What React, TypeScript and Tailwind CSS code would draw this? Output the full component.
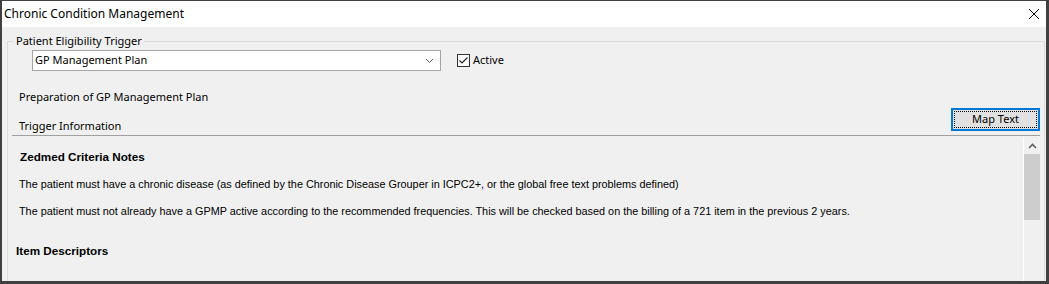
import React from "react";

const ui = "font-['Noto_Sans',sans-serif] text-[11px] text-black";
const doc = "font-['Liberation_Sans',Arial,sans-serif] text-black";

const Chevron = ({ up = false }: { up?: boolean }) => (
  <svg width="9" height="6" viewBox="0 0 9 6" className={up ? "rotate-180" : ""}>
    <path d="M1 1 L4.5 4.5 L8 1" fill="none" stroke="#606060" strokeWidth={up ? 1.6 : 1} />
  </svg>
);

const MapTextButton = () => (
  <button className="h-[23px] w-[89px] border-2 border-[#0078d7] bg-[#e1e1e1] p-px">
    <span className={`${ui} flex h-full w-full items-center justify-center border border-dotted border-black`}>
      Map Text
    </span>
  </button>
);

export default function App() {
  return (
    <div className="flex h-[284px] w-[1049px] flex-col overflow-hidden border-t border-r-[3px] border-b-[3px] border-l-2 border-[#404040] bg-[#f0f0f0]">
      {/* title bar */}
      <div className="flex h-[26px] shrink-0 items-center justify-between bg-white pl-[2px] pr-[5px]">
        <span className="font-['Noto_Sans',sans-serif] text-[12px] text-black">Chronic Condition Management</span>
        <svg width="12" height="12" viewBox="0 0 12 12" className="mr-[1px]">
          <path d="M1 1 L11 11 M11 1 L1 11" stroke="#000" strokeWidth="1" />
        </svg>
      </div>

      {/* group box */}
      <fieldset className="mt-[7px] mr-px ml-[5px] flex min-h-0 flex-1 flex-col border border-b-0 border-[#dcdcdc] px-[4px]">
        <legend className={`${ui} ml-[2px] px-[2px] leading-[14px]`}>Patient Eligibility Trigger</legend>

        <div className="mt-[2px] flex items-center">
          <div className="ml-[20px] flex h-[21px] w-[409px] items-center justify-between border border-[#a5a5a5] bg-white pr-[6px] pl-[2px]">
            <span className={ui}>GP Management Plan</span>
            <Chevron />
          </div>
          <label className="ml-[16px] flex items-center gap-[3px]">
            <span className="flex h-[13px] w-[13px] items-center justify-center border border-[#333] bg-white">
              <svg width="11" height="11" viewBox="0 0 11 11">
                <path d="M1.5 5.5 L4 8 L9.5 2.5" fill="none" stroke="#222" strokeWidth="1.2" />
              </svg>
            </span>
            <span className={ui}>Active</span>
          </label>
        </div>

        <div className={`${ui} mt-[17px] pl-[7px] leading-[18px]`}>Preparation of GP Management Plan</div>

        <div className="mt-[2px] flex items-end justify-between">
          <span className={`${ui} mb-[-4px] pl-[7px] leading-[18px]`}>Trigger Information</span>
          <MapTextButton />
        </div>

        <div className="mt-[4px] h-px shrink-0 bg-[#a0a0a0]" />

        {/* scrolling notes */}
        <div className="mt-[1px] flex min-h-0 flex-1">
          <div className={`${doc} flex-1 pt-[13px] pl-[3px]`}>
            <div className="pl-[5px] text-[11.7px] leading-[14px] font-bold">Zedmed Criteria Notes</div>
            <p className="mt-[14px] pl-[4px] text-[10.85px] leading-[13px]">
              The patient must have a chronic disease (as defined by the Chronic Disease Grouper in ICPC2+, or the global free text problems defined)
            </p>
            <p className="mt-[14px] pl-[4px] text-[10.85px] leading-[13px]">
              The patient must not already have a GPMP active according to the recommended frequencies. This will be checked based on the billing of a 721 item in the previous 2 years.
            </p>
            <div className="mt-[26px] pl-px text-[11.7px] leading-[14px] font-bold">Item Descriptors</div>
          </div>
          <div className="flex w-[17px] shrink-0 flex-col border-l border-white bg-[#f0f0f0]">
            <div className="flex h-[17px] items-center justify-center">
              <Chevron up />
            </div>
            <div className="h-[66px] w-[16px] bg-[#cdcdcd]" />
          </div>
        </div>
      </fieldset>
    </div>
  );
}
